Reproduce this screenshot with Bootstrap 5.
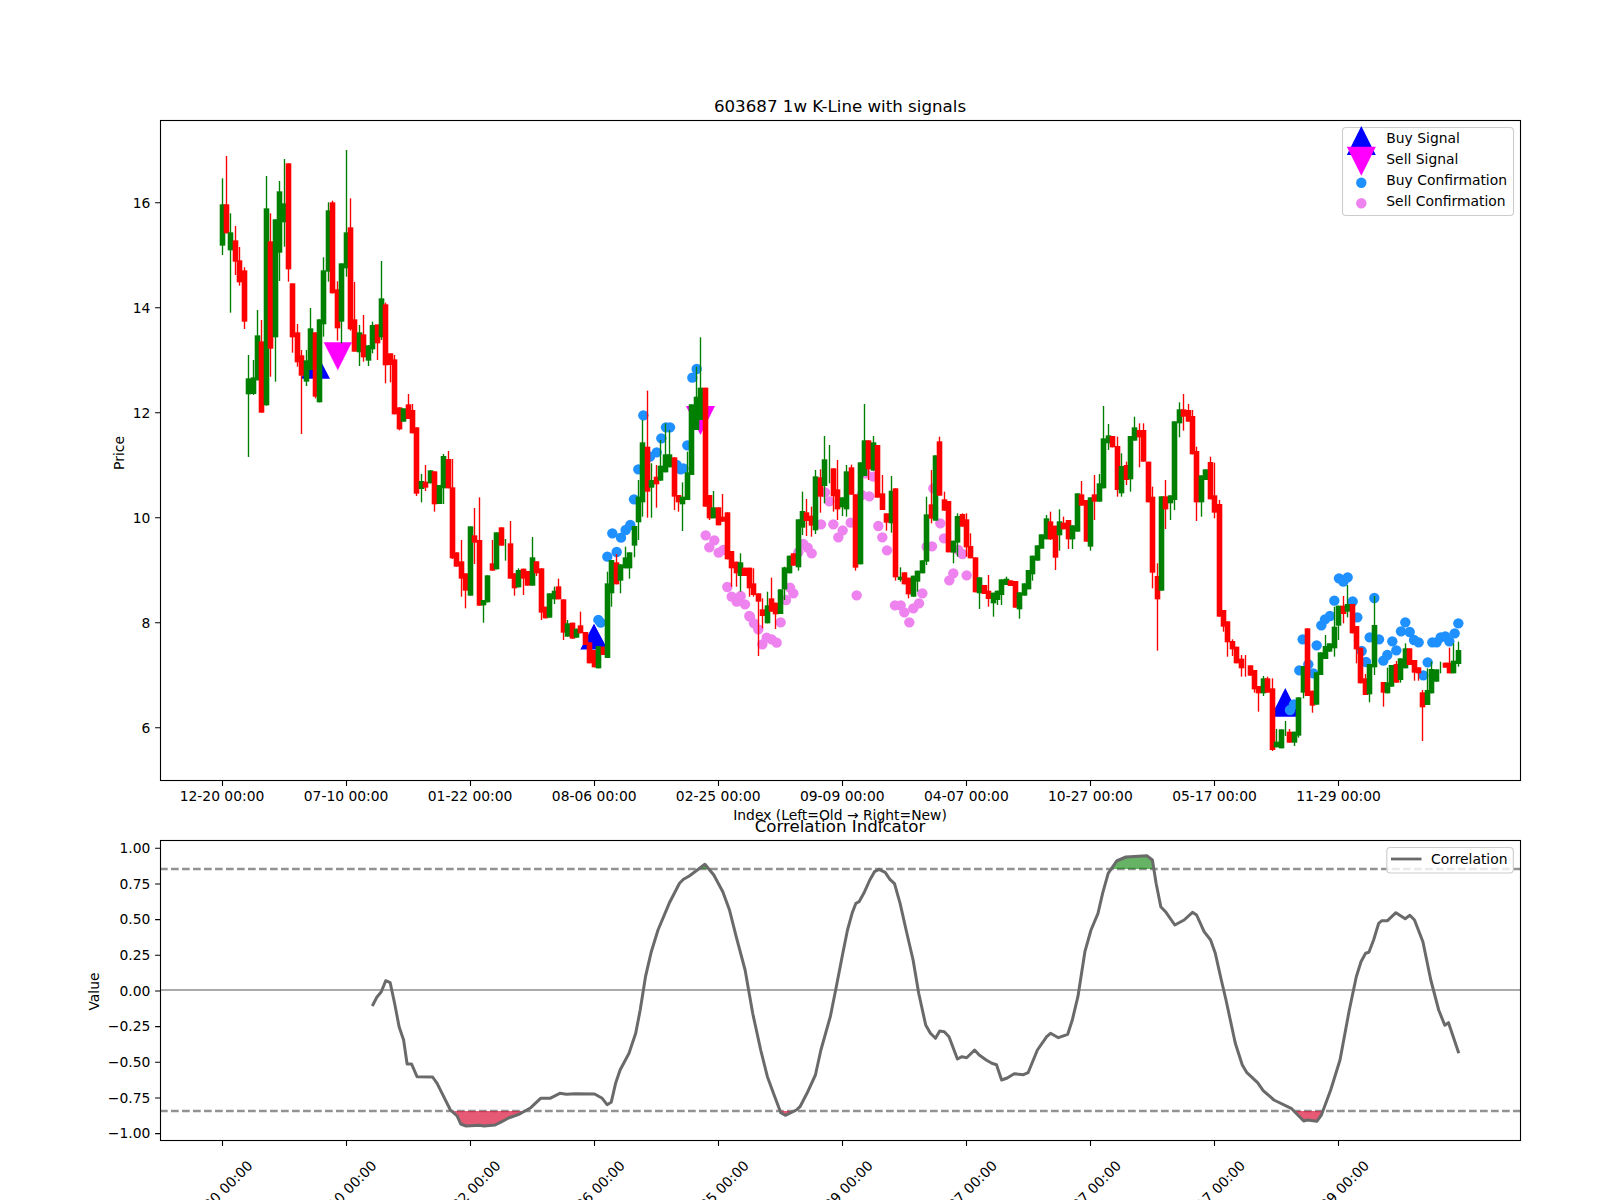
<!doctype html>
<html lang="en">
<head>
<meta charset="utf-8">
<title>603687 1w K-Line with signals</title>
<link href="https://cdn.jsdelivr.net/npm/bootstrap@5.3.0/dist/css/bootstrap.min.css" rel="stylesheet">
<style>
html,body{background:#fff;overflow:hidden;height:1200px}
.plot-figure{display:block;width:1600px;height:1200px}
.plot-figure text{font-family:"DejaVu Sans",sans-serif;font-size:13.89px;fill:#000}
.plot-figure text.plot-title{font-size:16.67px}
.plot-end{text-anchor:end}
.plot-mid{text-anchor:middle}
.plot-spine{fill:none;stroke:#000;stroke-width:1.1px}
.plot-tick{fill:none;stroke:#000;stroke-width:1.1px}
.plot-legend{fill:#fff;fill-opacity:.8;stroke:#ccc;stroke-width:1.1px}
.plot-zero{stroke:#aaa;stroke-width:2.2px}
.plot-thr{stroke:#929292;stroke-width:2.3px;stroke-dasharray:7.7 3.3}
.plot-corr{fill:none;stroke:#6a6a6a;stroke-width:3px;stroke-linejoin:round}
</style>
</head>
<body class="m-0">
<main class="d-flex p-0 m-0">
<svg class="plot-figure" xmlns="http://www.w3.org/2000/svg" viewBox="0 0 1600 1200">
  <g id="sigs"></g>
  <g id="cands"></g>
  <rect class="plot-spine" x="160.5" y="120.5" width="1360" height="660"/>
  <path class="plot-tick" id="tk1" d=""/>

  <text class="plot-title plot-mid" x="840" y="112">603687 1w K-Line with signals</text>
  <g class="plot-mid">
    <text class="plot-mid" x="222" y="801">12-20 00:00</text>
    <text class="plot-mid" x="346.1" y="801">07-10 00:00</text>
    <text class="plot-mid" x="470.1" y="801">01-22 00:00</text>
    <text class="plot-mid" x="594.2" y="801">08-06 00:00</text>
    <text class="plot-mid" x="718.2" y="801">02-25 00:00</text>
    <text class="plot-mid" x="842.3" y="801">09-09 00:00</text>
    <text class="plot-mid" x="966.4" y="801">04-07 00:00</text>
    <text class="plot-mid" x="1090.4" y="801">10-27 00:00</text>
    <text class="plot-mid" x="1214.5" y="801">05-17 00:00</text>
    <text class="plot-mid" x="1338.5" y="801">11-29 00:00</text>
  </g>
  <text class="plot-mid" x="840" y="820">Index (Left=Old → Right=New)</text>
  <text class="plot-end" x="150.3" y="208">16</text>
  <text class="plot-end" x="150.3" y="313">14</text>
  <text class="plot-end" x="150.3" y="418">12</text>
  <text class="plot-end" x="150.3" y="523">10</text>
  <text class="plot-end" x="150.3" y="628">8</text>
  <text class="plot-end" x="150.3" y="733">6</text>
  <text class="plot-mid" transform="translate(124 453) rotate(-90)">Price</text>

  <rect class="plot-legend" x="1342.5" y="127.5" width="171" height="88" rx="3.5"/>
  <path fill="#00f" d="M1361.3 126l14.5 29h-29z"/>
  <path fill="#f0f" d="M1346.8 146.7h29l-14.5 29z"/>
  <circle cx="1361.3" cy="182.7" r="5.2" fill="#1e90ff"/>
  <circle cx="1361.3" cy="203.3" r="5.2" fill="#ee82ee"/>
  <text x="1386.3" y="143.3">Buy Signal</text>
  <text x="1386.3" y="164.3">Sell Signal</text>
  <text x="1386.3" y="185.3">Buy Confirmation</text>
  <text x="1386.3" y="206">Sell Confirmation</text>

  <line class="plot-zero" x1="160" x2="1520" y1="990" y2="990"/>
  <line class="plot-thr" x1="160" x2="1520" y1="869" y2="869"/>
  <line class="plot-thr" x1="160" x2="1520" y1="1111" y2="1111"/>
  <g id="fills"></g>
  <path class="plot-corr" id="corr" d=""/>
  <rect class="plot-spine" x="160.5" y="840.5" width="1360" height="300"/>
  <path class="plot-tick" id="tk2" d=""/>

  <text class="plot-title plot-mid" x="840" y="832">Correlation Indicator</text>
  <text class="plot-end" x="150.3" y="853">1.00</text>
  <text class="plot-end" x="150.3" y="888.7">0.75</text>
  <text class="plot-end" x="150.3" y="924.4">0.50</text>
  <text class="plot-end" x="150.3" y="960">0.25</text>
  <text class="plot-end" x="150.3" y="995.7">0.00</text>
  <text class="plot-end" x="150.3" y="1031.4">−0.25</text>
  <text class="plot-end" x="150.3" y="1067">−0.50</text>
  <text class="plot-end" x="150.3" y="1102.7">−0.75</text>
  <text class="plot-end" x="150.3" y="1138.4">−1.00</text>
  <text class="plot-mid" transform="translate(99 991.5) rotate(-90)">Value</text>

  <rect class="plot-legend" x="1386.8" y="847.5" width="126.5" height="25.5" rx="3.5"/>
  <line x1="1391" x2="1421.5" y1="859" y2="859" stroke="#6a6a6a" stroke-width="2.78"/>
  <text x="1431" y="864">Correlation</text>

  <g class="plot-mid">
    <text class="plot-mid" transform="translate(220 1193) rotate(-45)" y="5">12-20 00:00</text>
    <text class="plot-mid" transform="translate(344.1 1193) rotate(-45)" y="5">07-10 00:00</text>
    <text class="plot-mid" transform="translate(468.1 1193) rotate(-45)" y="5">01-22 00:00</text>
    <text class="plot-mid" transform="translate(592.2 1193) rotate(-45)" y="5">08-06 00:00</text>
    <text class="plot-mid" transform="translate(716.2 1193) rotate(-45)" y="5">02-25 00:00</text>
    <text class="plot-mid" transform="translate(840.3 1193) rotate(-45)" y="5">09-09 00:00</text>
    <text class="plot-mid" transform="translate(964.4 1193) rotate(-45)" y="5">04-07 00:00</text>
    <text class="plot-mid" transform="translate(1088.4 1193) rotate(-45)" y="5">10-27 00:00</text>
    <text class="plot-mid" transform="translate(1212.5 1193) rotate(-45)" y="5">05-17 00:00</text>
    <text class="plot-mid" transform="translate(1336.5 1193) rotate(-45)" y="5">11-29 00:00</text>
  </g>
</svg>
</main>
<script src="https://cdn.jsdelivr.net/npm/bootstrap@5.3.0/dist/js/bootstrap.bundle.min.js"></script>
<script>
const NS="http://www.w3.org/2000/svg";
function el(parent,name,attrs){const e=document.createElementNS(NS,name);for(const k in attrs)e.setAttribute(k,attrs[k]);parent.appendChild(e);return e}
const blocks=[
[110,"g,283,407,205,435;r,283,370,138,370;g,367,421,310,608;r,391,455,348,495;r,451,517,411,527;r,481,635,472,657;g,805,853,735,1041;g,802,852,750,855;g,676,811,600,811;r,694,908,630,908;g,295,886,198,887;r,394,716,310,800;g,328,682,328,815;g,244,428,213,513;g,280,337,147,410;r,160,478,160,515;r,520,682,520,728;r,667,757,642,770;r,736,797,720,972;g,751,815,720,828;g,655,780,594,780;r,667,860,667,865;g,628,877,628,877;g,481,643,442,680;g,301,485,277,515;r,277,550,272,550;r,538,655,514,692;g,460,635,460,700;g,367,475,120,500;r,352,658,265,662;r,628,725,516,725;g,667,727,645,768;r,673,742,615,755;g,706,752,705,768;g,645,718,635,730;r,643,700,645,750;g,565,682,453,690;r,583,766,578,820;r,730,765,730,817;r,748,913,735,913"],
[395,"r,37,103,37,106;g,40,80;r,28,72,-3,72;r,45,115,27,115;r,97,296,97,303;g,258,282,237,322;r,260,278,210,288;g,226,265;r,229,328,229,350;g,270,327;g,183,280,177,327;r,192,280,168,280"],
[340,"r,442,655,357,657;r,637,680;r,664,716,600,770;r,700,752,700,805;g,559,767;r,586,608,504,672;r,600,797,472,797;g,780,796,780,848;g,706,787;r,670,692,600,692;g,577,688;r,562,617;g,,,597,662;r,610,716,543,716;r,700,745,700,767;g,690,742,685,742;r,686,716,686,765;r,693,737;g,652,737,591,737;r,664,700,664,708;r,685,818,685,840;r,800,835;g,760,833;g,752,778,740,792;r,739,778,716,778;r,778,878,778,900;g,850,890,840,890;r,848,896;g,866,893;r,856,880,815,880;r,876,915;r,907,970;r,930,982;g,918,985;r,920,945;g,730,954,695,954;g,660,760,660,800;r,667,733,642,733;g,673,722,673,760;g,652,685,620,685;g,637,685,637,716;g,558,617,558,652;g,470,547,420,600;g,307,487,240,530;r,320,455,152,533;g,420,443,370,533;r,410,433,375,503;g,377,422,300,422;g,343,397,250,397;g,343,382,270,382;r,352,470,352,510;r,465,487,465,515;g,470,493,427,573;g,397,480,335,480;g,193,405;g,170,270,80,270;g,143,240,-8,240;r,143,500;r,465,535,465,540;g,502,535,453,535;r,502,556;r,530,545,462,545;r,517,658;r,633,685,633,740;r,665,700,665,740;g,667,708,640,755;r,683,708;r,683,745,683,770"],
[380,"r,610,645,565,650;r,640,665,640,828;r,688,708,655,745;g,676,730,635,730;r,655,695,593,695;r,668,703,668,747;g,628,702;g,562,628,560,660;g,527,580;r,520,557;g,418,562,418,572;g,393,443,335,465;r,397,423,357,468;r,407,437,380,470;g,289,451,270,462;r,292,350,268,398;g,238,318,168,370;g,,,195,310;r,265,349,265,395;r,328,388,240,420;g,352,382,352,408;g,274,388,255,410;r,262,344,254,344;r,343,563,343,572;g,247,553;g,181,288,72,288;r,181,268,181,300;g,187,272,168,272;r,195,353;r,340,390,285,390;r,400,428,400,452;g,332,430,288,458;r,325,592,325,602;g,590,600,562,605;r,577,613;r,593,643,593,655;g,587,650;g,572,605,572,635;g,541,580;g,403,545,350,555;r,373,416,270,430;g,226,422;r,184,347,170,347;r,358,392,335,392;r,363,517;g,482,518,482,550;g,408,488,400,530;r,402,440,400,440;r,418,502,400,530;r,498,535,460,535;r,532,637;g,592,640,592,687;r,615,642;r,632,657,585,680;g,638,670,638,710;g,632,660,632,675;g,598,645,598,675;g,596,615,590,615;r,601,618;r,603,683;g,637,688,637,716;g,610,647;g,570,628;g,527,583,527,602;g,496,542;g,463,506;g,415,478,405,478"],
[380,"r,424,478,395,480;r,437,533,437,570;g,424,466,388,512;r,428,448,410,448;r,420,478,420,507;g,436,478,436,507;g,340,455;r,343,377,303,377;r,360,485;g,352,500,352,512;r,343,365,285,420;g,310,365,282,365;g,175,325,78,325;g,166,190,132,210;r,168,202;r,198,330,170,350;g,258,340,220,350;r,255,300,245,315;g,168,298,168,335;g,142,182,110,182;r,150,172,130,262;r,150,245,130,245;r,245,367,245,367;r,350,578,320,625;r,588,658,550,812;g,349,632;r,349,388,300,447;g,346,370,346,420;g,124,360,124,390;g,88,130,67,172;r,88,110,42,152;r,90,125,72,125;r,108,223,90,223;r,213,367,200,423;g,286,367,286,410;g,268,300;r,246,358,230,358;r,346,398,248,415;r,372,710,360,710;r,690,740,690,755;r,724,787,724,830;r,783,808,778,828;r,800,850;r,836,865,825,890;r,,,825,890;r,856,887;r,870,928,870,938;r,918,940,918,995;g,895,940,888,948;r,895,938,890,938"],
[560,"r,385,570,355,573;g,545,562,507,562;g,508,565;g,,,483,528;r,515,548,507,548;g,515,548,515,558;g,412,527,412,533;g,318,398,318,415;r,205,408;r,392,437,392,458;g,337,434;g,277,345;g,258,297,225,297;g,250,275;g,200,265,140,290;g,137,197,137,240;r,137,162,108,190;g,132,155,75,172;r,132,220;r,198,268,198,310;r,263,370;r,355,405,342,405;g,312,403,312,427;g,195,322,108,345;g,,,345,345;r,366,398,366,440;g,367,400,323,400;g,315,380,315,380;r,312,368,303,368;g,295,360,295,368;g,265,325,250,325;r,265,315;r,300,338,300,362;r,322,340,322,362;r,397,442,390,543;g,390,435,325,435;g,327,400,305,400;g,328,365;g,,,305,340;r,308,323;r,308,340,263,340;g,302,340,250,340;g,270,312,245,320"]
];
const cands=document.getElementById('cands');
const X=i=>222+4.4314*i;
const col={g:'#008000',r:'#ff0000'};
let idx=0;
for(const [oy,s] of blocks){
  for(const rec of s.split(';')){
    const p=rec.split(',');
    const c=col[p[0]],Y=v=>oy+Number(v)/3,x=Math.floor(X(idx))+.5;
    const hasBody=p[1]!==''&&p[1]!==undefined;
    const wt=p[3]!==undefined?p[3]:p[1], wb=p[4]!==undefined?p[4]:p[2];
    el(cands,'line',{x1:x,x2:x,y1:Y(wt),y2:Y(wb),stroke:c,'stroke-width':1.39});
    if(hasBody) el(cands,'rect',{x:x-2.8,width:5.6,y:Y(p[1]),height:Math.max(1,Y(p[2])-Y(p[1])),fill:c});
    idx++;
  }
}
/* ticks */
let t1='',t2='',i;
for(i=0;i<10;i++){const x=(Math.floor(X(i*28))+.5).toFixed(1);t1+=`M${x} 781v4.9`;t2+=`M${x} 1141v4.9`}
for(const v of [16,14,12,10,8,6]){const y=412.8+(12-v)*52.5;t1+=`M160 ${y}h-4.9`}
for(let k=0;k<9;k++){const y=848.3+k*35.67;t2+=`M160 ${y}h-4.9`}
document.getElementById('tk1').setAttribute('d',t1);
document.getElementById('tk2').setAttribute('d',t2);
/* signals */
const sigs=document.getElementById('sigs');
const dot=(x,y,c)=>el(sigs,'circle',{cx:x,cy:y,r:5.2,fill:c});
const BL='#1e90ff',VI='#ee82ee';
for(const [a,b] of [[445,840],[452,848],[472,650],[500,636],[487,580],[513,593],[527,570],[541,555],[552,478],[565,388],[580,226],[600,350],[620,337],[634,295],[648,262],[660,262],[712,316],[727,113],[740,87],[680,375],[692,388],[700,385]]) dot(450+a/3,340+b/3,BL);
for(const [a,b] of [[767,586],[793,601],[778,622],[806,638],[820,630],[832,741],[845,770],[860,785],[872,768],[885,793],[898,828]]) dot(450+a/3,340+b/3,VI);
for(const [a,b] of [[0,710],[12,730],[25,748],[37,793],[50,773],[65,778],[80,788],[92,727],[108,660],[120,623],[130,640],[145,517],[160,492],[173,503],[185,520],[213,433],[225,337],[238,364],[250,433],[265,472],[278,451],[302,428],[320,646],[335,345],[358,349],[347,280],[370,290],[385,438],[397,472],[411,511],[435,676],[452,676],[463,697],[478,727],[490,685],[507,670],[517,640],[530,500],[546,499],[550,325],[571,430],[582,475],[598,601],[610,580],[625,510],[637,522],[650,586]]) dot(750+a/3,380+b/3,VI);
el(sigs,'path',{d:'M315.5 350.7l14.5 28h-29z',fill:'#00f'});
el(sigs,'path',{d:'M323.3 342h29l-14.5 28.7z',fill:'#f0f',stroke:'#fff','stroke-width':.5});
el(sigs,'path',{d:'M594 622.7l14.5 27.3h-29z',fill:'#00f',stroke:'#fff','stroke-width':1});
el(sigs,'path',{d:'M686 406h29l-14.5 29z',fill:'#f0f'});
el(sigs,'path',{d:'M1285.3 688l14.5 28.7h-29z',fill:'#00f'});
for(const [a,b] of [[60,450],[72,433],[88,331],[98,238],[115,313],[130,340],[140,256],[154,196],[165,178],[180,168],[193,122],[207,55],[220,65],[233,52],[248,124],[262,172],[275,273],[288,306],[299,232],[313,114],[327,238],[340,302],[352,285],[367,244],[379,271],[393,214],[406,187],[419,216],[432,240],[446,247],[460,346],[473,307],[487,247],[500,247],[512,232],[526,229],[538,244],[554,220],[565,190]]) dot(1270+a/3,560+b/3,BL);
/* correlation */
const z7=[[610,738],[620,712],[630,695],[640,662],[650,668],[660,730],[670,800],[680,840],[688,912],[698,912],[710,950],[745,951],[755,970],[770,1010],[785,1050],[800,1068],[808,1092],[820,1098],[850,1096],[860,1098],[885,1095],[900,1085],[915,1074],[940,1062],[965,1043],[987,1015],[1008,1015],[1030,1000],[1045,1003],[1065,1001],[1108,1002],[1125,1015],[1136,1034],[1145,1027],[1155,970],[1165,930],[1185,880],[1200,820],[1210,750],[1222,650],[1235,575],[1250,510],[1275,430],[1298,370],[1307,358],[1320,348],[1355,313],[1375,345],[1395,395],[1410,450],[1425,530],[1445,630],[1462,760],[1480,870],[1495,950],[1510,1005],[1525,1058],[1535,1066],[1560,1050]];
const z8=[[0,1040],[15,1000],[33,945],[45,870],[65,770],[78,680],[92,580],[102,510],[112,460],[120,430],[127,425],[137,400],[150,360],[160,335],[170,328],[183,337],[193,358],[203,371],[215,430],[228,510],[243,600],[255,700],[270,795],[280,820],[291,835],[300,813],[310,815],[320,830],[338,897],[348,890],[358,893],[375,870],[385,885],[400,900],[412,910],[422,914],[433,960],[445,954],[460,941],[480,944],[490,938],[510,870],[530,830],[538,820],[555,833],[575,823],[585,780],[597,710],[612,575],[625,510],[640,460],[650,400],[662,340],[680,303],[700,291],[745,287],[757,300],[765,370],[775,440],[785,455],[805,495],[825,480],[843,457],[852,465],[868,515],[882,540],[892,580],[905,660],[915,720],[935,850],[950,915],[960,938],[983,968],[995,992],[1018,1020],[1055,1045],[1082,1083],[1090,1080],[1110,1084],[1120,1065],[1140,990],[1160,900],[1180,750],[1195,650],[1205,605],[1215,580],[1222,577],[1232,540],[1243,490],[1250,482],[1262,482],[1280,458],[1300,476],[1310,466],[1320,480],[1338,545],[1355,660],[1372,750],[1385,796],[1393,788],[1415,880]];
const pts=z7.map(([a,b])=>[100+a/2.24,760+b/3]).concat(z8.map(([a,b])=>[800+a/2.148,760+b/3]));
document.getElementById('corr').setAttribute('d','M'+pts.map(p=>p[0].toFixed(1)+' '+p[1].toFixed(1)).join('L'));
const fills=document.getElementById('fills');
function region(th,test,color,op){
  let cur=null;
  for(let k=0;k<pts.length;k++){
    const p=pts[k],q=pts[k-1];
    const on=test(p[1]);
    if(on&&!cur){
      const xc=q?q[0]+(p[0]-q[0])*(th-q[1])/(p[1]-q[1]):p[0];
      cur=[[xc,th],p];
    }else if(on){cur.push(p)}
    else if(cur){
      const xc=q[0]+(p[0]-q[0])*(th-q[1])/(p[1]-q[1]);
      cur.push([xc,th]);
      el(fills,'polygon',{points:cur.map(v=>v.join(',')).join(' '),fill:color,'fill-opacity':op});
      cur=null;
    }
  }
}
region(1111,y=>y>1111,'#dc143c',.7);
region(869,y=>y<869,'#008000',.6);
</script>
</body>
</html>
